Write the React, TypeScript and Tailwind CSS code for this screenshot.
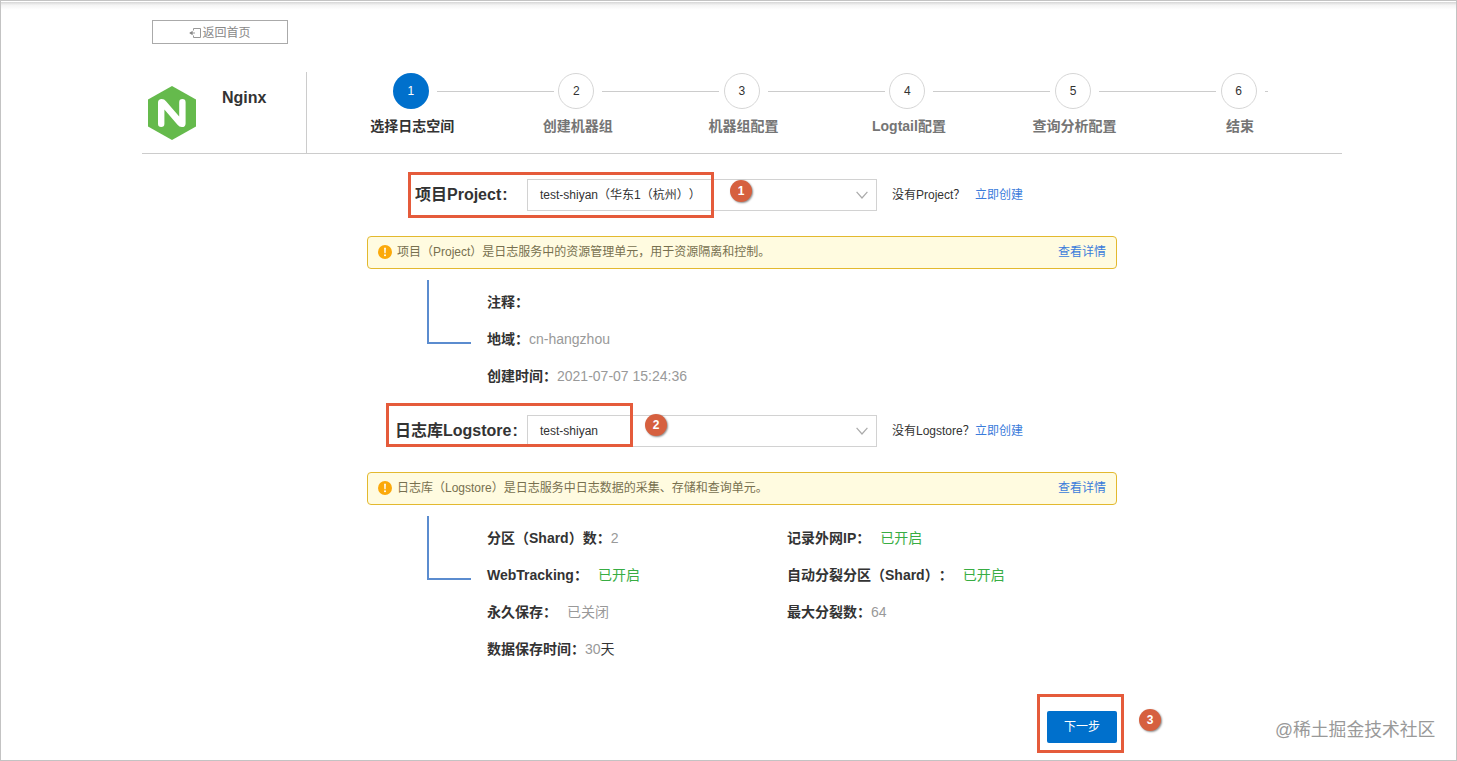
import type { ReactNode } from "react";

const STEPS = ["选择日志空间", "创建机器组", "机器组配置", "Logtail配置", "查询分析配置", "结束"];

function NginxLogo() {
  return (
    <svg width="50" height="56" viewBox="0 0 50 56" className="block">
      <path d="M25 1 L49 14.5 V41.5 L25 55 L1 41.5 V14.5 Z" fill="#65ba4c" />
      <path
        d="M11 17.5 Q11 14 14.8 14 Q17.3 14 19 16.2 L32.2 31.6 V17.2 Q32.2 14 35.4 14 Q38.6 14 38.6 17.2 V38.4 Q38.6 42 34.8 42 Q32.3 42 30.5 39.8 L17.4 24.6 V38.8 Q17.4 42 14.2 42 Q11 42 11 38.8 Z"
        fill="#fff"
      />
    </svg>
  );
}

function BackIcon() {
  return (
    <svg width="13" height="12" viewBox="0 0 13 12" className="block" fill="none" stroke="#999">
      <path d="M4.5 3.5 V1.5 H11.5 V10.5 H4.5 V8.5" />
      <path d="M1 6 H6" />
      <path d="M3.6 3.8 V8.2 L0.2 6 Z" fill="#888" stroke="none" />
    </svg>
  );
}

function Step({ index, label }: { index: number; label: string }) {
  const active = index === 0;
  const last = index === STEPS.length - 1;
  return (
    <div className="w-[165.56px] shrink-0">
      <div className="flex items-center">
        <div
          className={
            active
              ? "flex size-9 shrink-0 items-center justify-center rounded-full bg-[#0070cc] text-xs text-white"
              : "flex size-9 shrink-0 items-center justify-center rounded-full border border-[#d6d6d6] text-xs text-[#333]"
          }
        >
          {index + 1}
        </div>
        <div className={last ? "ml-[8px] h-px w-[3px] bg-[#ccc]" : "ml-[8px] h-px w-[117px] bg-[#ccc]"} />
      </div>
      <div
        className={
          active
            ? "mt-[7px] flex w-[39px] justify-center text-sm font-bold whitespace-nowrap text-[#333]"
            : "mt-[7px] flex w-[39px] justify-center text-sm font-bold whitespace-nowrap text-[#757575]"
        }
      >
        {label}
      </div>
    </div>
  );
}

function Select({ value }: { value: string }) {
  return (
    <div className="flex h-8 w-[350px] shrink-0 items-center justify-between border border-[#d2d2d2] pr-[8px] pl-[12px] text-xs text-[#333]">
      <span>{value}</span>
      <svg width="12" height="8" viewBox="0 0 12 8" fill="none" stroke="#aaa" strokeWidth="1.2">
        <path d="M0.6 0.8 L6 7 L11.4 0.8" />
      </svg>
    </div>
  );
}

function Notice({ children }: { children: ReactNode }) {
  return (
    <div className="mt-[25px] ml-[225px] flex h-[33px] w-[750px] items-center rounded-[4px] border border-[#e3b92f] bg-[#fffbe0] pr-[10px] pb-[2px] pl-[10px] text-xs text-[#77704f]">
      <svg width="14" height="14" viewBox="0 0 14 14" className="mt-px mr-[5px]">
        <circle cx="7" cy="7" r="7" fill="#fba90a" />
        <path d="M6.1 2.8 H7.9 L7.6 8.2 H6.4 Z" fill="#fff" />
        <circle cx="7" cy="10.3" r="1" fill="#fff" />
      </svg>
      <span>{children}</span>
      <a className="ml-auto text-[#3b7cdb]">查看详情</a>
    </div>
  );
}

function Bracket() {
  return <div className="mt-[11px] ml-[285px] h-[64px] w-[44px] shrink-0 border-b-2 border-l-2 border-[#5b8ccf]" />;
}

function Field({ label, children }: { label: string; children?: ReactNode }) {
  return (
    <div className="flex h-[37px] items-center text-sm whitespace-nowrap">
      <span className="font-bold text-[#333]">{label}</span>
      <span className="text-[#999]">{children}</span>
    </div>
  );
}

function On() {
  return <span className="ml-[10px] text-[#38ad43]">已开启</span>;
}

function Marker({ n, className }: { n: number; className: string }) {
  return (
    <div
      className={`absolute flex size-[22px] items-center justify-center rounded-full bg-[#d6603f] text-xs font-bold text-white shadow-[1px_1px_2px_rgba(0,0,0,0.45)] ${className}`}
    >
      {n}
    </div>
  );
}

export default function App() {
  return (
    <div className="relative h-[761px] w-[1457px] overflow-hidden border border-[#c3c3c3] bg-white font-['Liberation_Sans','Noto_Sans_CJK_SC',sans-serif] [text-spacing-trim:space-all]">
      <div className="mt-px h-[8px] bg-linear-to-b from-[#d6d6d6] via-[#f4f4f4] via-40% to-white" />
      <main className="ml-[141px] w-[1200px]">
        <button className="mt-[10px] ml-[10px] flex h-6 w-[136px] items-center justify-center border border-[#aaa] pt-[2px] text-xs text-[#888]">
          <BackIcon />
          返回首页
        </button>

        <header className="mt-[28px] flex h-[82px] border-b border-[#ccc]">
          <div className="flex w-[165px] shrink-0 border-r border-[#ccc]">
            <div className="mt-[13px] ml-[5px]">
              <NginxLogo />
            </div>
            <h1 className="mt-[14px] ml-[25px] text-base font-bold text-[#333]">Nginx</h1>
          </div>
          <div className="mt-px ml-[85.8px] flex">
            {STEPS.map((label, i) => (
              <Step key={label} index={i} label={label} />
            ))}
          </div>
        </header>

        <section>
          <div className="mt-[25px] flex items-center">
            <div className="ml-[273px] w-[112px] shrink-0 text-base font-bold whitespace-nowrap text-[#333]">
              项目Project<span className="ml-px">:</span>
            </div>
            <Select value="test-shiyan（华东1（杭州））" />
            <span className="ml-[15px] w-[83px] text-xs whitespace-nowrap text-[#333]">没有Project？</span>
            <a className="text-xs text-[#3b7cdb]">立即创建</a>
          </div>
          <Notice>项目（Project）是日志服务中的资源管理单元，用于资源隔离和控制。</Notice>
          <div className="flex">
            <Bracket />
            <div className="mt-[14px] ml-[16px]">
              <Field label="注释：" />
              <Field label="地域：">cn-hangzhou</Field>
              <Field label="创建时间：">2021-07-07 15:24:36</Field>
            </div>
          </div>
        </section>

        <section>
          <div className="mt-[21px] flex items-center">
            <div className="ml-[253px] w-[132px] shrink-0 text-base font-bold whitespace-nowrap text-[#333]">
              日志库Logstore<span className="ml-px">:</span>
            </div>
            <Select value="test-shiyan" />
            <span className="ml-[15px] w-[83px] text-xs whitespace-nowrap text-[#333]">没有Logstore？</span>
            <a className="text-xs text-[#3b7cdb]">立即创建</a>
          </div>
          <Notice>日志库（Logstore）是日志服务中日志数据的采集、存储和查询单元。</Notice>
          <div className="flex">
            <Bracket />
            <div className="mt-[14px] ml-[16px] w-[300px]">
              <Field label="分区（Shard）数：">2</Field>
              <Field label="WebTracking：">
                <On />
              </Field>
              <Field label="永久保存：">
                <span className="ml-[10px]">已关闭</span>
              </Field>
              <Field label="数据保存时间：">
                30<span className="text-[#333]">天</span>
              </Field>
            </div>
            <div className="mt-[14px]">
              <Field label="记录外网IP：">
                <On />
              </Field>
              <Field label="自动分裂分区（Shard）：">
                <On />
              </Field>
              <Field label="最大分裂数：">64</Field>
            </div>
          </div>
        </section>

        <button className="mt-[44px] ml-[905px] flex h-8 w-[70px] items-center justify-center rounded-[2px] bg-[#0070cc] text-xs text-white">
          下一步
        </button>
      </main>

      <div className="absolute top-[171px] left-[407px] h-[46px] w-[306px] border-3 border-[#e55b3b]" />
      <div className="absolute top-[402px] left-[385px] h-[44px] w-[247px] border-3 border-[#e55b3b]" />
      <div className="absolute top-[693px] left-[1036px] h-[59px] w-[87px] border-3 border-[#e55b3b]" />
      <Marker n={1} className="top-[179px] left-[729px]" />
      <Marker n={2} className="top-[413px] left-[644px]" />
      <Marker n={3} className="top-[708px] left-[1138px]" />
      <div className="absolute top-[715px] left-[1274px] text-[17.8px] leading-[28px] whitespace-nowrap text-[#999]">
        @稀土掘金技术社区
      </div>
    </div>
  );
}
